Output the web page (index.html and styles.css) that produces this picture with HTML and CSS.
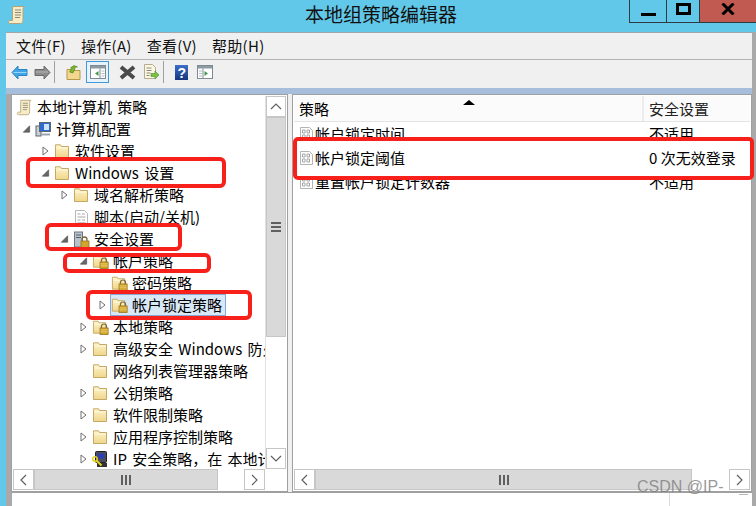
FILE: index.html
```html
<!DOCTYPE html>
<html lang="zh-CN">
<head>
<meta charset="utf-8">
<title>本地组策略编辑器</title>
<link rel="stylesheet" href="styles.css">
</head>
<body>
<svg class="defs" width="0" height="0" aria-hidden="true">
  <defs>
    <linearGradient id="fg" x1="0" y1="0" x2="0" y2="1"><stop offset="0" stop-color="#fdf3c8"/><stop offset="1" stop-color="#f0d68c"/></linearGradient>
    <linearGradient id="hb" x1="0" y1="0" x2="0" y2="1"><stop offset="0" stop-color="#3f6fc8"/><stop offset="1" stop-color="#16357f"/></linearGradient>
    <symbol id="folder" viewBox="0 0 17 17">
      <path d="M1.500 3.500V1.800h5l1 1.700h7v11h-13z" fill="url(#fg)" stroke="#c6a863"/>
      <path d="M2.500 4.500h11v1h-11z" fill="#fffbe6"/>
    </symbol>
    <symbol id="lockfolder" viewBox="0 0 18 17">
      <path d="M1.500 3.500V1.800h5l1 1.700h7v11h-13z" fill="url(#fg)" stroke="#c6a863"/>
      <path d="M2.500 4.500h11v1h-11z" fill="#fffbe6"/>
      <path d="M10 9V7.500a2.700 2.700 0 0 1 5.400 0V9" fill="none" stroke="#7c6a3a" stroke-width="1.300"/>
      <rect x="8.500" y="9" width="8.600" height="7" fill="#d3a52f" stroke="#94731c" stroke-width=".8"/>
      <path d="M9 11h7.600M9 13h7.600" stroke="#f0d477" stroke-width=".8"/>
    </symbol>
    <symbol id="policy" viewBox="0 0 17 17">
      <path d="M1.500 1.500h9l3 3v10h-12z" fill="#fff" stroke="#b4b4b4"/>
      <path d="M3.500 4h2.500v3H3.500zM8 4h2.500v3H8zM3.500 9h2.500v3H3.500zM8 9h2.500v3H8z" fill="none" stroke="#a5a5a5"/>
    </symbol>
    <symbol id="script" viewBox="0 0 17 17">
      <path d="M2.500 1.500h9l3 3v11h-12z" fill="#fff" stroke="#b8b8b8"/>
      <path d="M4.500 5h3M9 5h3M4.500 8h8M4.500 11h3M9 11h3" stroke="#a8a8a8"/>
      <path d="M4.500 13.500h8" stroke="#c4c4c4"/>
    </symbol>
    <symbol id="scroll" viewBox="0 0 18 20">
      <path d="M4.500 1.500h12c-1.500 1-1.500 2.500-1.500 4v9.500c0 2-1 3.500-2.500 3.500H2c-1 0-1.500-1-1.500-1.500s.5-1.500 1.500-1.500h2.500V4c0-1.500.5-2.500 0-2.500z" fill="#f7ecc6" stroke="#b3a37a"/>
      <path d="M7 5h6M7 7.500h6M7 10h6M7 12.500h5" stroke="#8a8a7c"/>
    </symbol>
    <symbol id="open" viewBox="0 0 8 10"><path d="M1.500 1l5 4-5 4z" fill="#fff" stroke="#6e6e6e"/></symbol>
    <symbol id="closed" viewBox="0 0 10 10"><path d="M8.500 1.500v7h-7z" fill="#666" stroke="#555" stroke-width=".8"/></symbol>
  </defs>
</svg>

<header class="titlebar">
  <svg class="appicon"><use href="#scroll"/></svg>
  <h1 class="title">本地组策略编辑器</h1>
  <div class="winbtns">
    <div class="winbtn minbtn"><span class="minglyph"></span></div>
    <div class="winbtn maxbtn"><span class="maxglyph"></span></div>
    <div class="winbtn closebtn">
      <svg width="14" height="12" viewBox="0 0 14 12"><path d="M1.500 .5l11 11m0-11l-11 11" stroke="#000" stroke-width="3"/></svg>
    </div>
  </div>
</header>

<div class="window">
  <nav class="menubar">
    <span class="menu">文件(F)</span>
    <span class="menu">操作(A)</span>
    <span class="menu">查看(V)</span>
    <span class="menu">帮助(H)</span>
  </nav>
  <div class="toolbar">
    <svg class="tool back" width="17" height="15" viewBox="0 0 17 15"><path d="M7 1L1 7.500 7 14v-3.500h9v-6H7z" fill="#42a5e6" stroke="#2a84c8"/><path d="M2.500 7.500h13" stroke="#9ad4f5"/></svg>
    <svg class="tool fwd" width="17" height="15" viewBox="0 0 17 15"><path d="M10 1l6 6.500L10 14v-3.500H1v-6h9z" fill="#8e8e8e" stroke="#6a6a6a"/><path d="M2 7h12" stroke="#b4b4b4"/></svg>
    <span class="sep sep1"></span>
    <svg class="tool up" width="15" height="15" viewBox="0 0 15 15"><path d="M1 4.500h4l1 1h8v9H1z" fill="#f2d88f" stroke="#b8974b"/><path d="M3.500 7L6 2.800H4.500L8 .5 11.500 2H9.500L7 8z" fill="#7fb52c" stroke="#4e7d12" stroke-width=".6"/></svg>
    <span class="toolbox"><svg width="16" height="14" viewBox="0 0 16 14"><rect x=".5" y=".5" width="15" height="13" fill="#fff" stroke="#7f8b93"/><path d="M1 1h14v2.500H1z" fill="#8b9aa3"/><path d="M10 3.500v10" stroke="#7f8b93"/><path d="M8.500 6v5L5 8.500z" fill="#3f9a4b"/><path d="M11.500 6h3M11.500 8.500h3M11.500 11h3" stroke="#b4bdc2"/></svg></span>
    <svg class="tool del" width="17" height="15" viewBox="0 0 17 15"><path d="M2 2l13 11m0-11L2 13" stroke="#4a4a4a" stroke-width="4"/></svg>
    <svg class="tool exp" width="17" height="16" viewBox="0 0 17 16"><path d="M1.500 .5h8l3 3v11h-11z" fill="#fbf7e4" stroke="#b4ac8c"/><path d="M3.500 4h5M3.500 6.500h5M3.500 9h4M3.500 11.500h3" stroke="#8a8a7c"/><path d="M8 9.500h4V7l4 4-4 4v-2.500H8z" fill="#7cc242" stroke="#4e8a22" stroke-width=".6"/></svg>
    <span class="sep sep2"></span>
    <svg class="tool help" width="13" height="15" viewBox="0 0 13 15"><rect width="13" height="15" fill="url(#hb)"/><text class="qmark" x="2.500" y="12.500">?</text></svg>
    <svg class="tool view2" width="16" height="14" viewBox="0 0 16 14"><rect x=".5" y=".5" width="15" height="13" fill="#fff" stroke="#7f8b93"/><path d="M1 1h14v2.500H1z" fill="#8b9aa3"/><path d="M6 3.500v10" stroke="#7f8b93"/><path d="M7.500 6v5l3.500-2.500z" fill="#3f9a4b"/><path d="M2 6h3M2 8.500h3M2 11h3" stroke="#b4bdc2"/></svg>
  </div>
  <div class="strip"></div>

  <main class="panes">
    <section class="pane leftpane">
      <div class="treewrap">
        <ul class="tree">
          <li class="row d0"><span class="twist"></span><svg class="ico"><use href="#scroll"/></svg><span class="lab">本地计算机 策略</span></li>
          <li class="row d1"><svg class="twist"><use href="#closed"/></svg><svg class="ico" viewBox="0 0 17 17"><rect x="1" y="5" width="5" height="10" fill="#c8ced6" stroke="#5c6670"/><rect x="4.500" y="1.500" width="11" height="9" fill="#2f6ad0" stroke="#5c6670"/><path d="M9 3h5v6H9z" fill="#cfe2fa"/><path d="M6 12.500h9v2H6z" fill="#9ba6b0"/></svg><span class="lab">计算机配置</span></li>
          <li class="row d2"><svg class="twist"><use href="#open"/></svg><svg class="ico"><use href="#folder"/></svg><span class="lab">软件设置</span></li>
          <li class="row d2"><svg class="twist"><use href="#closed"/></svg><svg class="ico"><use href="#folder"/></svg><span class="lab">Windows 设置</span></li>
          <li class="row d3"><svg class="twist"><use href="#open"/></svg><svg class="ico"><use href="#folder"/></svg><span class="lab">域名解析策略</span></li>
          <li class="row d3"><span class="twist"></span><svg class="ico"><use href="#script"/></svg><span class="lab">脚本(启动/关机)</span></li>
          <li class="row d3"><svg class="twist"><use href="#closed"/></svg><svg class="ico" viewBox="0 0 17 17"><rect x="1.500" y="1" width="8" height="15" fill="#b9c3cc" stroke="#6c7680"/><path d="M3 4h5M3 6.500h5" stroke="#56606a"/><path d="M9 10V8.500a2.500 2.500 0 0 1 5 0V10" fill="none" stroke="#7c6a3a" stroke-width="1.300"/><rect x="8" y="10" width="8" height="6.500" fill="#d3a52f" stroke="#94731c" stroke-width=".8"/></svg><span class="lab">安全设置</span></li>
          <li class="row d4"><svg class="twist"><use href="#closed"/></svg><svg class="ico"><use href="#lockfolder"/></svg><span class="lab">帐户策略</span></li>
          <li class="row d5"><span class="twist"></span><svg class="ico"><use href="#lockfolder"/></svg><span class="lab">密码策略</span></li>
          <li class="row d5"><svg class="twist"><use href="#open"/></svg><span class="selected"><svg class="ico"><use href="#lockfolder"/></svg><span class="lab">帐户锁定策略</span></span></li>
          <li class="row d4"><svg class="twist"><use href="#open"/></svg><svg class="ico"><use href="#lockfolder"/></svg><span class="lab">本地策略</span></li>
          <li class="row d4"><svg class="twist"><use href="#open"/></svg><svg class="ico"><use href="#folder"/></svg><span class="lab">高级安全 Windows 防火墙</span></li>
          <li class="row d4"><span class="twist"></span><svg class="ico"><use href="#folder"/></svg><span class="lab">网络列表管理器策略</span></li>
          <li class="row d4"><svg class="twist"><use href="#open"/></svg><svg class="ico"><use href="#folder"/></svg><span class="lab">公钥策略</span></li>
          <li class="row d4"><svg class="twist"><use href="#open"/></svg><svg class="ico"><use href="#folder"/></svg><span class="lab">软件限制策略</span></li>
          <li class="row d4"><svg class="twist"><use href="#open"/></svg><svg class="ico"><use href="#folder"/></svg><span class="lab">应用程序控制策略</span></li>
          <li class="row d4"><svg class="twist"><use href="#open"/></svg><svg class="ico" viewBox="0 0 17 17"><rect x="3.500" y=".5" width="11" height="11" rx="1" fill="#4a4f5c" stroke="#222"/><rect x="5.500" y="2.500" width="7" height="5" fill="#2f3fb0"/><rect x="5" y="12" width="10" height="4" fill="#333"/><circle cx="3" cy="8" r="2.200" fill="none" stroke="#e8d020" stroke-width="1.500"/><path d="M4.500 9.500l5 5" stroke="#e8d020" stroke-width="2"/></svg><span class="lab">IP 安全策略，在 本地计算机</span></li>
        </ul>
        <div class="vscroll">
          <span class="sbtn"><svg width="12" height="7" viewBox="0 0 12 7"><path d="M1 6l5-5 5 5" fill="none" stroke="#606060" stroke-width="1.200"/></svg></span>
          <span class="vthumb"><span class="grip"></span></span>
          <span class="vrest"></span>
          <span class="sbtn"><svg width="12" height="7" viewBox="0 0 12 7"><path d="M1 1l5 5 5-5" fill="none" stroke="#606060" stroke-width="1.200"/></svg></span>
        </div>
      </div>
      <div class="hscroll leftscroll">
        <span class="hbtn"><svg width="7" height="12" viewBox="0 0 7 12"><path d="M6 1L1 6l5 5" fill="none" stroke="#606060" stroke-width="1.200"/></svg></span>
        <span class="hthumb lthumb"><span class="hgrip"></span></span>
        <span class="hrest"></span>
        <span class="hbtn"><svg width="7" height="12" viewBox="0 0 7 12"><path d="M1 1l5 5-5 5" fill="none" stroke="#606060" stroke-width="1.200"/></svg></span>
        <span class="corner"></span>
      </div>
    </section>

    <section class="pane rightpane">
      <div class="listhead">
        <span class="col1">策略<i class="sortmark"></i></span>
        <span class="col2">安全设置</span>
      </div>
      <div class="listbody">
        <div class="lrow"><span class="col1"><svg class="ico"><use href="#policy"/></svg>帐户锁定时间</span><span class="col2">不适用</span></div>
        <div class="lrow marked"><span class="col1"><svg class="ico"><use href="#policy"/></svg>帐户锁定阈值</span><span class="col2">0 次无效登录</span></div>
        <div class="lrow"><span class="col1"><svg class="ico"><use href="#policy"/></svg>重置帐户锁定计数器</span><span class="col2">不适用</span></div>
      </div>
      <div class="hscroll rightscroll">
        <span class="hbtn"><svg width="7" height="12" viewBox="0 0 7 12"><path d="M6 1L1 6l5 5" fill="none" stroke="#606060" stroke-width="1.200"/></svg></span>
        <span class="hthumb rthumb"><span class="hgrip"></span></span>
        <span class="hrest"></span>
        <span class="hbtn"><svg width="7" height="12" viewBox="0 0 7 12"><path d="M1 1l5 5-5 5" fill="none" stroke="#606060" stroke-width="1.200"/></svg></span>
      </div>
    </section>
  </main>

  <footer class="statusbar"><span class="statuscell"><i class="statusdash"></i></span></footer>
</div>

<div class="mark m1"></div>
<div class="mark m2"></div>
<div class="mark m3"></div>
<div class="mark m4"></div>
<div class="watermark">CSDN @IP-</div>
</body>
</html>
```

FILE: styles.css
```css
* { box-sizing: border-box; }
html, body { margin: 0; padding: 0; }
body {
  position: relative;
  width: 756px;
  height: 506px;
  overflow: hidden;
  background: #62c8ea;
  font-family: "Noto Sans CJK SC", "Noto Sans", sans-serif;
  font-size: 15px;
  line-height: 22px;
  color: #000;
}
.defs { position: absolute; }
ul { list-style: none; margin: 0; padding: 0; }

.titlebar { height: 32px; display: flex; position: relative; }
.appicon { width: 18px; height: 20px; margin: 5px 0 0 8px; }
.title {
  position: absolute; left: 305px; top: 0; margin: 0;
  font-size: 19px; font-weight: 400; line-height: 28px; color: #111;
}
.winbtns { margin-left: auto; display: flex; height: 23px; }
.winbtn {
  height: 23px; border: 1px solid #2f3a42; border-top: 0;
  display: flex; align-items: center; justify-content: center;
}
.minbtn { width: 37px; border-right: 0; align-items: flex-end; padding-bottom: 6px; }
.maxbtn { width: 33px; border-right: 0; }
.closebtn { width: 57px; background: #c15b52; border-right: 0; }
.minglyph { width: 15px; height: 3px; background: #000; }
.maxglyph { width: 15px; height: 12px; border: 3px solid #000; margin-top: -4px; }
.closebtn svg { margin-top: -4px; }

.window {
  margin-left: 6px; width: 750px; height: 474px;
  background: #a9a9a9; border-top: 1px solid #a0a6aa; border-right: 4px solid #a9a9a9;
  display: flex; flex-direction: column;
}
.menubar {
  height: 27px; background: #f0f0f0; display: flex; align-items: center;
  padding: 0 0 0 10px; gap: 15px; border-bottom: 1px solid #b2b2b2; flex: none;
}
.menu { font-size: 15px; color: #111; letter-spacing: .3px; }
.toolbar {
  height: 28px; background: #f0f0f0; display: flex; align-items: center;
  padding: 0 0 4px 5px; flex: none;
}
.tool { flex: none; }
.fwd { margin-left: 6px; }
.sep { width: 1px; height: 22px; background: #a0a0a0; flex: none; }
.sep1 { margin-left: 3px; }
.up { margin-left: 11px; }
.toolbox {
  width: 23px; height: 22px; margin-left: 5px; border: 1px solid #3e9ad8;
  background: #e8f2fa; display: flex; align-items: center; justify-content: center; flex: none;
}
.del { margin-left: 10px; }
.exp { margin-left: 7px; }
.sep2 { margin-left: 3px; }
.help { margin-left: 11px; }
.qmark { font-size: 14px; font-weight: 700; fill: #fff; font-family: "Liberation Sans", sans-serif; }
.view2 { margin-left: 9px; }
.strip { height: 6px; background: #a6bedb; flex: none; }

.panes {
  flex: none; height: 398px; margin-left: 5px; background: #f0f0f0;
  display: flex; gap: 4px;
}
.pane {
  background: #fff; border: 1px solid #a0a0a0; display: flex; flex-direction: column;
  padding: 1px; height: 398px;
}
.leftpane { width: 277px; }
.rightpane { width: 460px; }

.treewrap { display: flex; height: 373px; flex: none; }
.tree { width: 252px; flex: none; overflow: hidden; }
.row { height: 22px; display: flex; align-items: center; white-space: nowrap; word-spacing: 2px; }
.d0 { padding-left: 0; }
.d1 { padding-left: 9px; }
.d2 { padding-left: 28px; }
.d3 { padding-left: 47px; }
.d4 { padding-left: 66px; }
.d5 { padding-left: 85px; }
.twist { width: 9px; height: 10px; flex: none; margin-right: 4px; }
.d0 .twist { width: 3px; margin: 0; }
.ico { width: 17px; height: 17px; flex: none; }
.lab { margin-left: 4px; }
.d0 .lab { margin-top: -1px; }
.selected {
  display: flex; align-items: center; height: 22px; padding-right: 3px;
  background: #d9e8f7; border: 1px solid #88a8d4; margin-left: -1px;
}

.vscroll { width: 21px; flex: none; display: flex; flex-direction: column; border-left: 1px solid #e0e0e0; }
.sbtn {
  height: 21px; flex: none; display: flex; align-items: center; justify-content: center;
  background: #fff; border: 1px solid #c6c6c6;
}
.vthumb {
  height: 220px; flex: none; background: #d9d9d9; border: 1px solid #c6c6c6;
  display: flex; align-items: center; justify-content: center;
}
.grip { width: 10px; height: 10px; border-top: 2px solid #606060; border-bottom: 2px solid #606060; position: relative; }
.grip::after { content: ""; position: absolute; left: 0; right: 0; top: 2px; height: 2px; background: #606060; }
.vrest { flex: 1; background: #fff; }

.hscroll { height: 21px; display: flex; flex: none; }
.hbtn {
  width: 21px; flex: none; display: flex; align-items: center; justify-content: center;
  background: #fff; border: 1px solid #c6c6c6;
}
.hthumb {
  background: #d9d9d9; border: 1px solid #c6c6c6; display: flex; align-items: center;
  justify-content: center; flex: none;
}
.lthumb { width: 184px; }
.rthumb { width: 377px; }
.hgrip { width: 10px; height: 10px; border-left: 2px solid #606060; border-right: 2px solid #606060; position: relative; }
.hgrip::after { content: ""; position: absolute; top: 0; bottom: 0; left: 2px; width: 2px; background: #606060; }
.hrest { flex: 1; background: #fff; }
.corner { width: 21px; flex: none; background: #fff; }

.listhead {
  height: 26px; display: flex; background: #fbfbfb; border-bottom: 1px solid #e3e3e3; flex: none;
}
.col1 { width: 350px; flex: none; display: flex; align-items: center; padding-left: 5px; position: relative; white-space: nowrap; }
.col2 { flex: 1; padding-left: 5px; display: flex; align-items: center; white-space: nowrap; position: relative; }
.listhead .col1 { border-right: 2px solid #ececec; }
.listhead .col2 { color: #222; }
.listhead .col1, .listhead .col2 { padding-top: 1px; }
.sortmark {
  position: absolute; left: 169px; top: 4px; width: 0; height: 0;
  border-left: 6px solid transparent; border-right: 6px solid transparent; border-bottom: 5px solid #000;
}
.listbody { flex: 1; }
.lrow { height: 24px; display: flex; align-items: center; position: relative; }
.lrow .ico { margin-right: -1px; }
.marked { z-index: 1; }
.marked::before {
  content: ""; position: absolute; left: -1px; right: -4px; top: -9px; bottom: -10px;
  background: #fff; border: 4px solid #f8201a; border-radius: 5px;
}

.statusbar { flex: 1; margin-left: 6px; background: #fff; display: flex; justify-content: flex-end; border-top: 1px solid #a0a0a0; }
.statuscell { width: 83px; border-left: 1px solid #dcdcdc; position: relative; }
.statusdash { position: absolute; left: 69px; top: 1px; width: 9px; height: 1px; background: #b8b8b8; }

.mark {
  position: absolute; border: 4px solid #f8201a; border-radius: 6px; z-index: 2;
}
.m1 { left: 26px; top: 157px; width: 200px; height: 31px; }
.m2 { left: 45px; top: 223px; width: 137px; height: 28px; }
.m3 { left: 63px; top: 253px; width: 148px; height: 20px; }
.m4 { left: 86px; top: 290px; width: 166px; height: 30px; }

.watermark {
  position: absolute; left: 637px; top: 476px; z-index: 3;
  font-family: "Liberation Sans", sans-serif; font-size: 16px; line-height: 22px;
  color: rgba(120,120,120,.75); white-space: nowrap;
}
```
